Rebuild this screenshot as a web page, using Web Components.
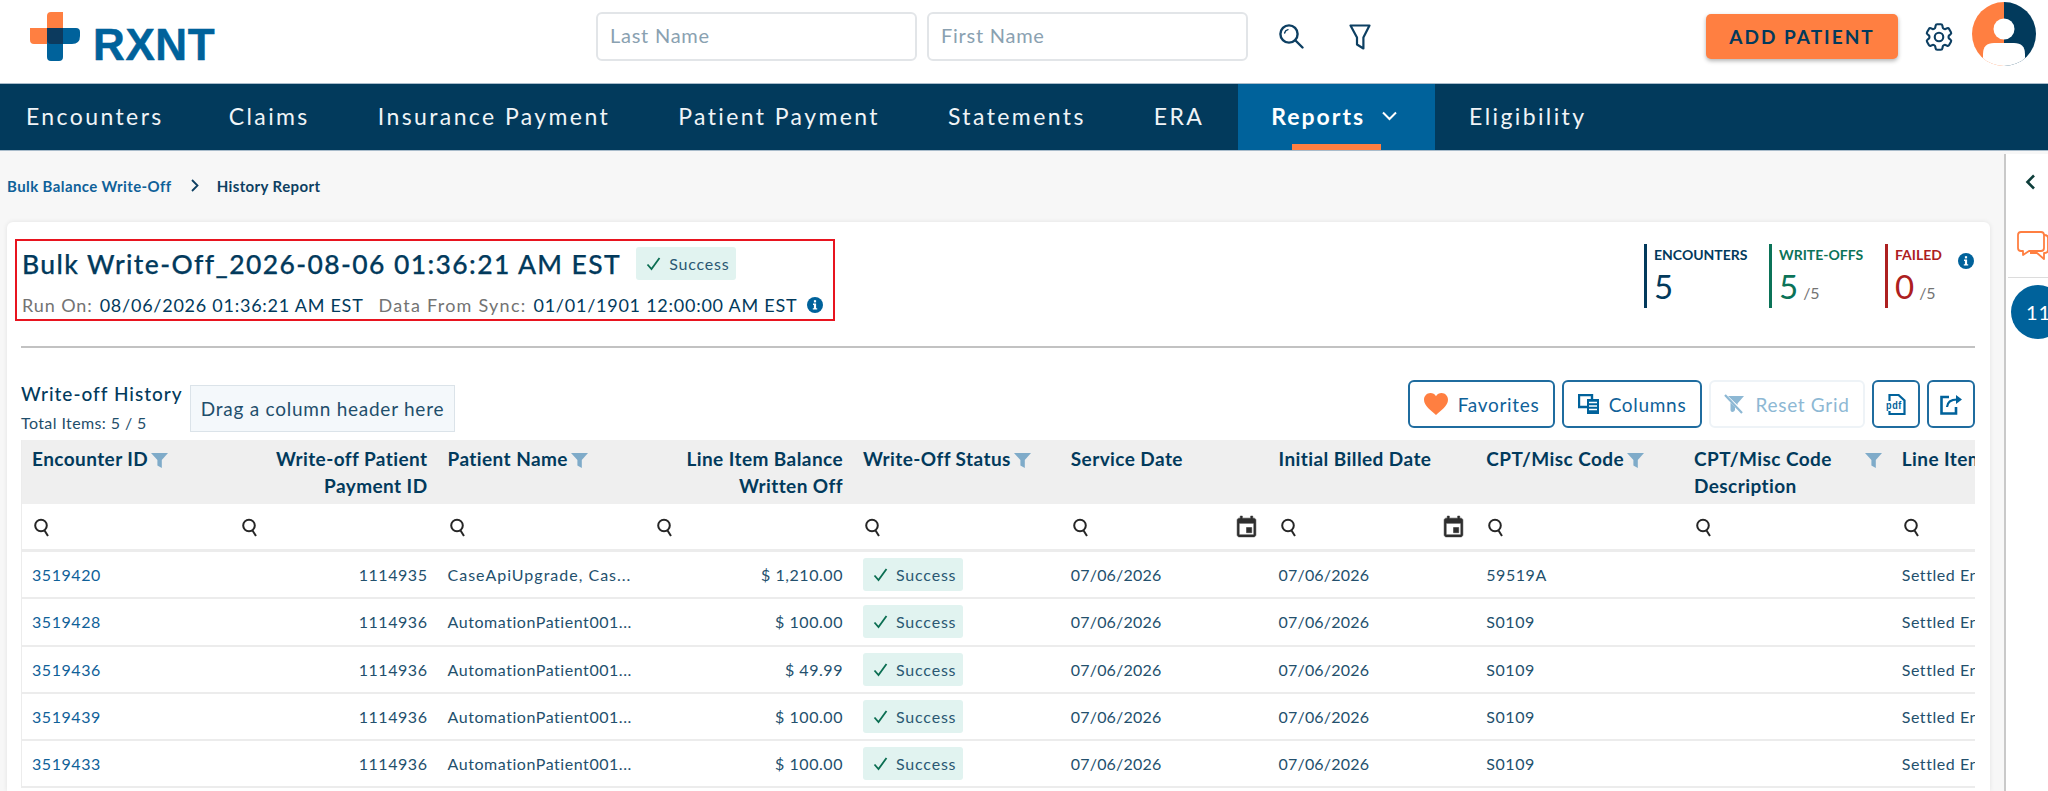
<!DOCTYPE html>
<html lang="en">
<head>
<meta charset="utf-8">
<title>Bulk Write-Off History</title>
<style>
  html, body { margin: 0; height: 791px; overflow: hidden; }
  body {
    display: flex; flex-direction: column;
    font-family: "Lato", "Noto Sans", sans-serif;
    color: #023a5c; background: #f7f7f7;
  }
</style>
</head>
<body>
<rx-topbar></rx-topbar>
<rx-navbar>
  <rx-navitem style="padding:0 31px 3px 26px">Encounters</rx-navitem>
  <rx-navitem>Claims</rx-navitem>
  <rx-navitem>Insurance Payment</rx-navitem>
  <rx-navitem>Patient Payment</rx-navitem>
  <rx-navitem>Statements</rx-navitem>
  <rx-navitem>ERA</rx-navitem>
  <rx-navitem active>Reports</rx-navitem>
  <rx-navitem>Eligibility</rx-navitem>
</rx-navbar>
<rx-layout>
  <rx-crumbs link="Bulk Balance Write-Off" current="History Report"></rx-crumbs>
  <rx-panel>
    <rx-report-title slot="head"
      name="Bulk Write-Off_2026-08-06 01:36:21 AM EST"
      run="08/06/2026 01:36:21 AM EST"
      sync="01/01/1901 12:00:00 AM EST"></rx-report-title>
    <rx-stat slot="stats" style="width:125px" label="ENCOUNTERS" value="5"></rx-stat>
    <rx-stat slot="stats" style="width:116px;--tone:#0b7358" label="WRITE-OFFS" value="5" total="/5"></rx-stat>
    <rx-stat slot="stats" style="width:73px;--tone:#ad2020" label="FAILED" value="0" total="/5"></rx-stat>
    <rx-info slot="stats" style="margin:9px 1px 0 0"></rx-info>
    <rx-toolbar></rx-toolbar>
    <rx-grid></rx-grid>
  </rx-panel>
  <rx-rail slot="rail"></rx-rail>
</rx-layout>

<script>
// icons used in more than one component
const ICON = {
  check: '<svg width="15" height="15" viewBox="0 0 15 15" fill="none" stroke="#0b6e52" stroke-width="1.8"><path d="M1.5 8.5l4 4.5L13.5 2"/></svg>',
  funnel: '<svg width="17" height="15" viewBox="0 0 17 15" fill="#7fabc9"><path d="M0 0h17l-6.2 7v8l-4.4-2.6V7z"/></svg>',
  lens: '<svg width="20" height="20" viewBox="0 0 20 20" fill="none" stroke="#262626" stroke-width="2"><circle cx="9" cy="7.500" r="5.800"/><path d="M12.500 12.500l3.500 5.500"/></svg>',
  calendar: '<svg width="25" height="25" viewBox="0 0 24 24" fill="#2e2e2e" stroke="#2e2e2e" stroke-width=".5"><path d="M17 12h-5v5h5v-5zM16 1v2H8V1H6v2H5c-1.11 0-1.99.9-1.99 2L3 19c0 1.1.89 2 2 2h14c1.1 0 2-.9 2-2V5c0-1.1-.9-2-2-2h-1V1h-2zm3 18H5V8h14v11z"/></svg>'
};

class RxStatus extends HTMLElement {
  connectedCallback() {
    this.attachShadow({ mode: 'open' }).innerHTML = `
      <style>
        :host { display: inline-flex; align-items: center; gap: 8px; width: 100px; height: 33px;
                box-sizing: border-box; padding-left: 10px; background: #e1f3f0; border-radius: 3px;
                font-size: 16px; color: #2a5873; letter-spacing: .8px; flex: none; }
      </style>
      ${ICON.check}<slot></slot>`;
  }
}
customElements.define('rx-status', RxStatus);

class RxInfo extends HTMLElement {
  connectedCallback() {
    this.attachShadow({ mode: 'open' }).innerHTML = `
      <style>
        :host { display: inline-flex; width: 16px; height: 16px; flex: none; }
      </style>
      <svg width="16" height="16" viewBox="0 0 16 16">
        <circle cx="8" cy="8" r="8" fill="#00629b"/>
        <rect x="6.9" y="3.2" width="2.2" height="2.2" fill="#fff"/>
        <path d="M6 6.6h3.1v4.6H10.2v1.4H5.8v-1.4h1.1V8H6z" fill="#fff"/>
      </svg>`;
  }
}
customElements.define('rx-info', RxInfo);

class RxField extends HTMLElement {
  connectedCallback() {
    this.attachShadow({ mode: 'open' }).innerHTML = `
      <style>
        :host { display: flex; align-items: center; box-sizing: border-box; width: 321px; height: 49px;
                padding: 0 0 3px 12px; background: #fff; border: 2px solid #e2e5e8; border-radius: 6px;
                font-size: 20px; color: #8aa1b1; letter-spacing: .75px; }
      </style>
      <slot></slot>`;
  }
}
customElements.define('rx-field', RxField);

class RxTopbar extends HTMLElement {
  connectedCallback() {
    this.attachShadow({ mode: 'open' }).innerHTML = `
      <style>
        :host { display: flex; align-items: center; box-sizing: border-box; height: 83px; flex: none;
                padding: 0 12px 10px 0; background: #fff; }
        .logo { display: flex; align-items: center; width: 596px; padding-left: 30px; box-sizing: border-box; gap: 13px; }
        .word { font-family: "Liberation Sans", sans-serif; font-weight: 700; font-size: 44px; line-height: 49px;
                letter-spacing: .6px; color: #00629b; margin-top: 15px; -webkit-text-stroke: .5px #00629b; }
        .fields { display: flex; gap: 10px; }
        .find { margin-left: 31px; display: flex; }
        .funnel { margin-left: 45px; display: flex; }
        button { margin-left: auto; width: 192px; height: 45px; border: 0; border-radius: 5px; padding: 0;
                 background: #ff7f41; box-shadow: 0 2px 4px rgba(0,0,0,.3);
                 font: 700 19px "Lato", sans-serif; letter-spacing: 2px; color: #023a5c; }
        .gear { margin-left: 24px; display: flex; }
        .avatar { margin: -5px 0 0 16px; display: flex; }
      </style>
      <div class="logo">
        <svg width="50" height="49" viewBox="0 0 50 49">
          <path d="M17 4q0-4 4-4h12v32H4q-4 0-4-4V16h17z" fill="#ff7f41"/>
          <path d="M17 16h29q4 0 4 4v4q0 8-8 8h-9v13q0 4-4 4H21q-4 0-4-4z" fill="#00629b"/>
          <path d="M17 16h16v16H21q-4 0-4-4z" fill="#0c3a5e"/>
        </svg>
        <span class="word">RXNT</span>
      </div>
      <div class="fields"><rx-field>Last Name</rx-field><rx-field>First Name</rx-field></div>
      <span class="find"><svg width="25" height="25" viewBox="0 0 25 25" fill="none" stroke="#0d3f62" stroke-width="2.4" stroke-linecap="round">
        <circle cx="10" cy="10" r="8.6"/><path d="M16.5 16.5L23.5 23.5"/><path d="M5.6 9a4.5 4.5 0 0 1 3.4-3.4" stroke-width="1.4"/></svg></span>
      <span class="funnel"><svg width="22" height="26" viewBox="0 0 22 26" fill="none" stroke="#0d3f62" stroke-width="2.2" stroke-linejoin="round">
        <path d="M1.5 1.5h19L14.4 13.5v11L8 20.5v-7z"/></svg></span>
      <button>ADD PATIENT</button>
      <span class="gear"><svg width="34" height="34" viewBox="0 0 24 24" fill="none" stroke="#0d3f62" stroke-width="1.5">
        <path d="M9.594 3.94c.09-.542.56-.94 1.11-.94h2.593c.55 0 1.02.398 1.11.94l.213 1.281c.063.374.313.686.645.87.074.04.147.083.22.127.325.196.72.257 1.075.124l1.217-.456a1.125 1.125 0 0 1 1.37.49l1.296 2.247a1.125 1.125 0 0 1-.26 1.431l-1.003.827c-.293.241-.438.613-.43.992a7.723 7.723 0 0 1 0 .255c-.008.378.137.75.43.991l1.004.827c.424.35.534.955.26 1.43l-1.298 2.247a1.125 1.125 0 0 1-1.369.491l-1.217-.456c-.355-.133-.75-.072-1.076.124a6.47 6.47 0 0 1-.22.128c-.331.183-.581.495-.644.869l-.213 1.281c-.09.543-.56.94-1.11.94h-2.594c-.55 0-1.019-.398-1.11-.94l-.213-1.281c-.062-.374-.312-.686-.644-.87a6.52 6.52 0 0 1-.22-.127c-.325-.196-.72-.257-1.076-.124l-1.217.456a1.125 1.125 0 0 1-1.369-.49l-1.297-2.247a1.125 1.125 0 0 1 .26-1.431l1.004-.827c.292-.24.437-.613.43-.991a6.932 6.932 0 0 1 0-.255c.007-.38-.138-.751-.43-.992l-1.004-.827a1.125 1.125 0 0 1-.26-1.43l1.297-2.247a1.125 1.125 0 0 1 1.37-.491l1.216.456c.356.133.751.072 1.076-.124.072-.044.146-.086.22-.128.332-.183.582-.495.644-.869l.214-1.28Z"/>
        <circle cx="12" cy="12" r="3"/></svg></span>
      <span class="avatar"><svg width="64" height="64" viewBox="0 0 64 64">
        <clipPath id="round"><circle cx="32" cy="32" r="32"/></clipPath>
        <g clip-path="url(#round)">
          <rect width="32" height="64" fill="#ff7f41"/><rect x="32" width="32" height="64" fill="#023a5c"/>
          <circle cx="32" cy="27" r="10.5" fill="#fff"/>
          <path d="M11 64V52q0-11 11-11h20q11 0 11 11v12z" fill="#fff"/>
        </g></svg></span>`;
  }
}
customElements.define('rx-topbar', RxTopbar);

class RxNavbar extends HTMLElement {
  connectedCallback() {
    this.attachShadow({ mode: 'open' }).innerHTML = `
      <style>
        :host { display: flex; height: 68px; flex: none; box-sizing: border-box; background: #023a5c;
                border-top: 1px solid #a9bccb; border-bottom: 1px solid #a9bccb; }
      </style>
      <slot></slot>`;
  }
}
customElements.define('rx-navbar', RxNavbar);

class RxNavitem extends HTMLElement {
  connectedCallback() {
    const active = this.hasAttribute('active');
    this.attachShadow({ mode: 'open' }).innerHTML = `
      <style>
        :host { position: relative; display: flex; align-items: center; gap: 16px; padding: 0 34px 3px;
                font-size: 23px; letter-spacing: 2.4px; color: #f0f4f7; }
        :host([active]) { background: #00629b; font-weight: 700; color: #fff; padding: 0 37px 3px 33px; letter-spacing: 2px; }
        .bar { position: absolute; left: 54px; bottom: 0; width: 89px; height: 6px; background: #ff7f41; }
      </style>
      <slot></slot>
      ${active ? `<svg width="17" height="10" viewBox="0 0 17 10" fill="none" stroke="#fff" stroke-width="2"><path d="M2 1.5l6.5 6.5L15 1.5"/></svg><span class="bar"></span>` : ''}`;
  }
}
customElements.define('rx-navitem', RxNavitem);

class RxLayout extends HTMLElement {
  connectedCallback() {
    this.attachShadow({ mode: 'open' }).innerHTML = `
      <style>
        :host { display: flex; flex: 1; min-height: 0; }
        .main { flex: 1; min-width: 0; padding: 0 14px 0 7px; display: flex; flex-direction: column; }
      </style>
      <div class="main"><slot></slot></div>
      <slot name="rail"></slot>`;
  }
}
customElements.define('rx-layout', RxLayout);

class RxCrumbs extends HTMLElement {
  connectedCallback() {
    this.attachShadow({ mode: 'open' }).innerHTML = `
      <style>
        :host { display: flex; align-items: center; height: 71px; flex: none; box-sizing: border-box; padding-bottom: 2px;
                font-size: 15px; font-weight: 700; letter-spacing: .4px; color: #0d3f62; }
        a { color: #0f6199; text-decoration: none; }
        svg { margin: 0 18px 0 19px; }
      </style>
      <a>${this.getAttribute('link')}</a>
      <svg width="8" height="13" viewBox="0 0 8 13" fill="none" stroke="#0d3f62" stroke-width="1.8"><path d="M1 1l5.5 5.5L1 12"/></svg>
      <span>${this.getAttribute('current')}</span>`;
  }
}
customElements.define('rx-crumbs', RxCrumbs);

class RxPanel extends HTMLElement {
  connectedCallback() {
    this.attachShadow({ mode: 'open' }).innerHTML = `
      <style>
        :host { display: block; flex: 1; background: #fff; border-radius: 6px 6px 0 0; box-sizing: border-box;
                padding: 17px 15px 0 14px; box-shadow: 0 0 5px rgba(0,0,0,.09); min-height: 0; }
        .head { display: flex; justify-content: space-between; margin-left: -6px; }
        .stats { display: flex; align-items: flex-start; padding-top: 5px; }
        hr { height: 2px; margin: 25px 0 32px; border: 0; background: #c2c2c2; }
      </style>
      <div class="head">
        <slot name="head"></slot>
        <div class="stats"><slot name="stats"></slot></div>
      </div>
      <hr>
      <slot></slot>`;
  }
}
customElements.define('rx-panel', RxPanel);

class RxReportTitle extends HTMLElement {
  connectedCallback() {
    this.attachShadow({ mode: 'open' }).innerHTML = `
      <style>
        :host { display: block; box-sizing: border-box; height: 82px; width: 820px; padding: 6px 0 0 5px;
                border: 2px solid #e8141f; }
        .top { display: flex; align-items: center; gap: 15px; height: 33px; }
        h1 { margin: 0; font-size: 26.5px; font-weight: 500; letter-spacing: 1.4px; white-space: nowrap; -webkit-text-stroke: .25px #023a5c; }
        .meta { display: flex; align-items: center; height: 24px; margin-top: 13px; font-size: 18px; white-space: nowrap; }
        .k { color: #737373; margin-right: 7px; letter-spacing: 1.25px; }
        .v { margin-right: 15px; letter-spacing: .75px; }
      </style>
      <div class="top"><h1>${this.getAttribute('name')}</h1><rx-status>Success</rx-status></div>
      <div class="meta">
        <span class="k" style="letter-spacing:.9px">Run On:</span><span class="v">${this.getAttribute('run')}</span>
        <span class="k">Data From Sync:</span><span class="v" style="margin-right:10px">${this.getAttribute('sync')}</span>
        <rx-info></rx-info>
      </div>`;
  }
}
customElements.define('rx-report-title', RxReportTitle);

class RxStat extends HTMLElement {
  connectedCallback() {
    const total = this.getAttribute('total');
    this.attachShadow({ mode: 'open' }).innerHTML = `
      <style>
        :host { display: block; box-sizing: border-box; height: 64px; padding-left: 7px; flex: none;
                border-left: 3px solid var(--tone, #023a5c); color: var(--tone, #023a5c); }
        .l { font-size: 14px; font-weight: 700; line-height: 22px; white-space: nowrap; }
        .n { display: flex; align-items: baseline; gap: 5px; font-size: 33px; line-height: 40px; }
        small { font-size: 16px; color: #737373; }
      </style>
      <div class="l">${this.getAttribute('label')}</div>
      <div class="n">${this.getAttribute('value')}${total ? `<small>${total}</small>` : ''}</div>`;
  }
}
customElements.define('rx-stat', RxStat);

class RxBtn extends HTMLElement {
  connectedCallback() {
    this.attachShadow({ mode: 'open' }).innerHTML = `
      <style>
        :host { display: inline-flex; align-items: center; justify-content: center; gap: 10px; height: 48px;
                box-sizing: border-box; border: 2px solid #1f6c9f; border-radius: 6px; background: #fff;
                font-size: 19px; letter-spacing: .7px; color: #0f6199; flex: none; }
        :host([disabled]) { border-color: #eef3f7; color: #8db8d4; }
      </style>
      <slot name="icon"></slot><slot></slot>`;
  }
}
customElements.define('rx-btn', RxBtn);

class RxToolbar extends HTMLElement {
  connectedCallback() {
    this.attachShadow({ mode: 'open' }).innerHTML = `
      <style>
        :host { display: flex; align-items: flex-start; height: 60px; }
        .name { width: 169px; flex: none; margin-top: 2px; }
        .t { font-size: 19px; line-height: 24px; font-weight: 500; letter-spacing: 1px; white-space: nowrap; }
        .c { font-size: 16px; line-height: 22px; margin-top: 6px; letter-spacing: .4px; color: #1f4e6b; }
        .drag { display: flex; align-items: center; justify-content: center; width: 265px; height: 47px; margin-top: 5px;
                box-sizing: border-box; background: #f4f8fb; border: 1px solid #dbe3e9;
                font-size: 19px; letter-spacing: .75px; color: #1f4e6b; }
        .btns { margin-left: auto; display: flex; gap: 7px; }
        svg { display: block; }
        svg text { font: 700 10px "Liberation Sans", sans-serif; fill: #00629b; }
      </style>
      <div class="name"><div class="t">Write-off History</div><div class="c">Total Items: 5 / 5</div></div>
      <div class="drag">Drag a column header here</div>
      <div class="btns">
        <rx-btn style="width:147px">
          <svg slot="icon" width="24" height="23" viewBox="0 0 24 23" fill="#ff7f41"><path d="M12 22C7 17.5 0 13 0 6.8 0 2.8 3 0 6.4 0 8.700 0 10.800 1.200 12 3.200 13.200 1.200 15.300 0 17.600 0 21 0 24 2.800 24 6.800 24 13 17 17.500 12 22z"/></svg>
          Favorites
        </rx-btn>
        <rx-btn style="width:140px">
          <svg slot="icon" width="21" height="20" viewBox="0 0 21 20"><path d="M1 1h13v12H1z" fill="none" stroke="#00629b" stroke-width="2.4"/><rect x="9" y="5" width="12" height="15" fill="#00629b"/><path d="M11 8.500h8M11 12h8M11 15.500h8" stroke="#fff" stroke-width="1.300"/></svg>
          Columns
        </rx-btn>
        <rx-btn disabled style="width:156px">
          <svg slot="icon" width="21" height="20" viewBox="0 0 21 20" fill="#8db8d4"><path d="M4 2h16l-6.500 7.500V11z"/><path d="M6.500 8.500L11 13v2.500c0 2.500-4.500 4-4.500 0z"/><path d="M1 1l17 18" stroke="#8db8d4" stroke-width="2.200"/></svg>
          Reset Grid
        </rx-btn>
        <rx-btn style="width:48px">
          <svg width="20" height="21" viewBox="0 0 20 21">
            <path d="M3.500 7V1h9l6 5.500V20h-15v-3" fill="none" stroke="#00629b" stroke-width="2.200"/>
            <rect y="8" width="15" height="8" fill="#fff"/>
            <text x="0" y="15" textLength="16" lengthAdjust="spacingAndGlyphs">pdf</text>
          </svg>
        </rx-btn>
        <rx-btn style="width:48px">
          <svg width="23" height="21" viewBox="0 0 23 21" fill="none" stroke="#00629b" stroke-width="2.600">
            <path d="M9 3H1.500v16.500H16V13"/><path d="M7 13c.5-5 4-7.500 10-7.500" stroke-width="2.200"/><path d="M16 1l6 4.500-6 4.500z" fill="#00629b" stroke="none"/>
          </svg>
        </rx-btn>
      </div>`;
  }
}
customElements.define('rx-toolbar', RxToolbar);

const COLUMNS = [
  { title: 'Encounter ID', filter: true },
  { title: 'Write-off Patient Payment ID', right: true },
  { title: 'Patient Name', filter: true },
  { title: 'Line Item Balance Written Off', right: true },
  { title: 'Write-Off Status', filter: true },
  { title: 'Service Date', date: true },
  { title: 'Initial Billed Date', date: true },
  { title: 'CPT/Misc Code', filter: true },
  { title: 'CPT/Misc Code Description', filter: true, spread: true },
  { title: 'Line Item Status' }
];

const ROWS = [
  ['3519420', '1114935', 'CaseApiUpgrade, Cas...', '$ 1,210.00', '07/06/2026', '07/06/2026', '59519A', '', 'Settled Encounter'],
  ['3519428', '1114936', 'AutomationPatient001...', '$ 100.00', '07/06/2026', '07/06/2026', 'S0109', '', 'Settled Encounter'],
  ['3519436', '1114936', 'AutomationPatient001...', '$ 49.99', '07/06/2026', '07/06/2026', 'S0109', '', 'Settled Encounter'],
  ['3519439', '1114936', 'AutomationPatient001...', '$ 100.00', '07/06/2026', '07/06/2026', 'S0109', '', 'Settled Encounter'],
  ['3519433', '1114936', 'AutomationPatient001...', '$ 100.00', '07/06/2026', '07/06/2026', 'S0109', '', 'Settled Encounter']
];

class RxGrid extends HTMLElement {
  connectedCallback() {
    const head = COLUMNS.map(c => `
      <div class="cell th ${c.right ? 'r' : ''} ${c.spread ? 'spread' : ''}">
        <span>${c.title}</span>${c.filter ? ICON.funnel : ''}
      </div>`).join('');
    const search = COLUMNS.map(c => `
      <div class="cell flt">${ICON.lens}${c.date ? ICON.calendar : ''}</div>`).join('');
    const body = ROWS.map(r => {
      const [id, pay, name, amount, ...rest] = r;
      return `<div class="cell"><a>${id}</a></div>
        <div class="cell r">${pay}</div>
        <div class="cell ${name.includes(',') ? 'wide' : ''}">${name}</div>
        <div class="cell r">${amount}</div>
        <div class="cell"><rx-status>Success</rx-status></div>
        ${rest.map((v, i) => `<div class="cell ${i < 2 ? 'date' : ''}">${v}</div>`).join('')}`;
    }).join('');
    this.attachShadow({ mode: 'open' }).innerHTML = `
      <style>
        :host { display: block; width: 1954px; overflow: hidden; box-sizing: border-box;
                border-left: 1px solid #ececec; }
        .grid { display: grid; grid-template-columns: repeat(10, 207.75px); grid-auto-rows: 47.25px;
                grid-template-rows: 64px 48px; font-size: 16px; letter-spacing: .55px; color: #23506d; }
        .cell { display: flex; align-items: center; box-sizing: border-box; min-width: 0; padding: 0 10px;
                border-bottom: 2px solid #ececec; white-space: nowrap; overflow: hidden; }
        .date { letter-spacing: .2px; }
        .wide { letter-spacing: 1px; }
        .r { justify-content: flex-end; text-align: right; }
        a { color: #0f6199; }
        .th { align-items: flex-start; gap: 3px; padding-top: 5px; background: #efefef; border: 0;
              font-size: 19px; line-height: 27px; font-weight: 700; letter-spacing: .42px; color: #023a5c; white-space: normal; }
        .th svg { flex: none; margin-top: 8px; }
        .spread { justify-content: space-between; }
        .spread span { width: 150px; }
        .flt { justify-content: space-between; border-bottom-width: 3px; padding-top: 2px; }
      </style>
      <div class="grid">${head}${search}${body}</div>`;
  }
}
customElements.define('rx-grid', RxGrid);

class RxRail extends HTMLElement {
  connectedCallback() {
    this.attachShadow({ mode: 'open' }).innerHTML = `
      <style>
        :host { display: block; width: 44px; flex: none; box-sizing: border-box; margin-top: 3px; background: #fff;
                border-left: 2px solid #c9c9c9; overflow: hidden; }
        .back { display: block; margin: 20px 0 0 19px; }
        .chat { display: block; margin: 41px 0 0 11px; }
        hr { height: 1px; margin: 16px 0 0 2px; border: 0; background: #dcdcdc; }
        .count { display: flex; align-items: center; width: 54px; height: 54px; margin: 7px 0 0 5px; padding-left: 15px;
                 box-sizing: border-box; border-radius: 50%; background: #00629b; color: #fff; font-size: 20px; letter-spacing: 1px; }
      </style>
      <svg class="back" width="11" height="16" viewBox="0 0 11 16" fill="none" stroke="#0d3d3a" stroke-width="2.600"><path d="M9 1.500L2.500 8 9 14.500"/></svg>
      <svg class="chat" width="32" height="30" viewBox="0 0 32 30" fill="none" stroke="#ff7f41" stroke-width="1.800" stroke-linejoin="round">
        <path d="M4 1h20q3 0 3 3v13q0 3-3 3H12l-6 4v-4H4q-3 0-3-3V4q0-3 3-3z"/>
        <path d="M27 4q4 0 4 3v12q0 3-3 3h-1v6l-7-6h-7"/>
      </svg>
      <hr>
      <div class="count">11</div>`;
  }
}
customElements.define('rx-rail', RxRail);
</script>
</body>
</html>
